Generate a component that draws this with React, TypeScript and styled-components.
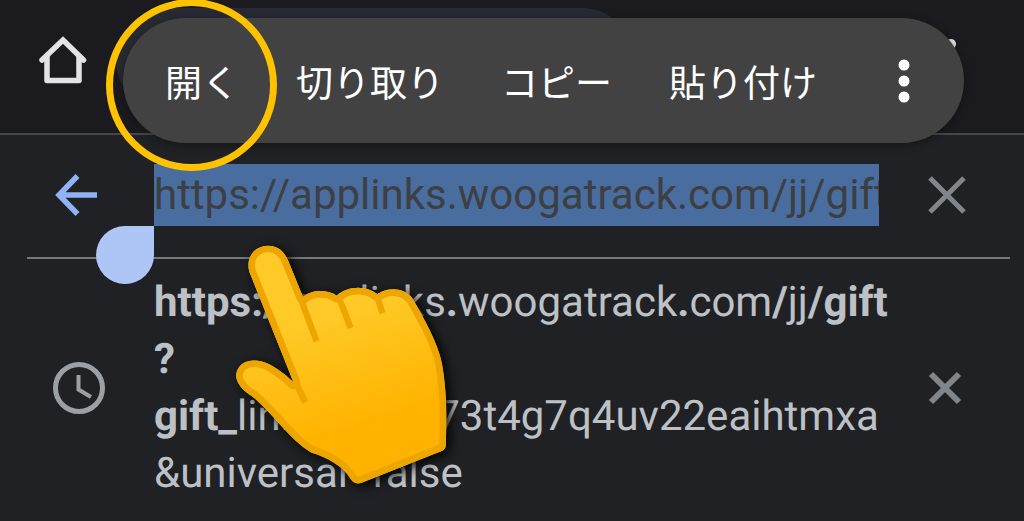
import React from 'react';
import styled, { createGlobalStyle } from 'styled-components';

const GlobalStyle = createGlobalStyle`
  * { box-sizing: border-box; }
  html { background: #202124; }
  body {
    margin: 0;
    background: #202124;
    font-family: Roboto, "Noto Sans CJK JP", sans-serif;
    text-rendering: geometricPrecision;
  }
  button { padding: 0; border: 0; background: none; color: inherit; font: inherit; cursor: pointer; }
  svg { display: block; }
`;

const Page = styled.main`
  position: relative;
  min-height: 100vh;
  overflow: hidden;
`;

const TopBar = styled.header`
  display: flex;
  align-items: flex-start;
  height: 135px;
  padding: 8px 48px 0 36px;
  background: #1b1b1f;
  border-bottom: 2px solid #46464d;
`;

const TopButton = styled.button`
  flex: none;
  margin-top: 26px;
  color: #e3e3e6;
`;

const AddressPill = styled.div`
  width: 518px;
  height: 104px;
  margin-left: 26px;
  margin-right: auto;
  border-radius: 52px;
  background: #282a33;
`;

const SearchRow = styled.form`
  display: flex;
  align-items: center;
  height: 124px;
  margin: 0 14px 0 27px;
  padding: 0 43px 2px 25px;
  border-bottom: 2px solid #76777c;
`;

const IconButton = styled.button<{ $color: string }>`
  flex: none;
  color: ${(p) => p.$color};
`;

const UrlInput = styled.input`
  flex: 1;
  min-width: 0;
  height: 62px;
  margin: 0 48px 0 54px;
  padding: 0;
  border: 0;
  border-radius: 0;
  outline: 0;
  background: #4a6da0;
  color: #3c3f43;
  font: 400 42px/62px Roboto, sans-serif;
`;

const Suggestions = styled.ul`
  margin: 0;
  padding: 15px 59px 18px 50px;
  list-style: none;
`;

const Suggestion = styled.li`
  display: flex;
  align-items: center;
  color: #9aa0a6;
`;

const SuggestionLink = styled.a`
  flex: 1;
  min-width: 0;
  margin: 0 24px 0 47px;
  color: #bdc1c6;
  font-size: 42px;
  line-height: 57px;
  text-decoration: none;
  white-space: nowrap;

  span { display: block; }
  b { font-weight: 700; }
`;

const TextMenu = styled.div`
  position: absolute;
  top: 18px;
  left: 123px;
  right: 60px;
  display: flex;
  align-items: center;
  gap: 57px;
  height: 125px;
  padding: 0 30px 0 42px;
  border-radius: 63px;
  background: #424242;
  box-shadow: 0 2px 8px rgba(0, 0, 0, 0.35);
  color: #fff;
`;

const MenuItem = styled.button`
  flex: none;
  height: 60px;
  font-family: "Noto Sans CJK JP", sans-serif;
  font-size: 37px;
  line-height: 58px;
  white-space: nowrap;
`;

const MoreItem = styled.button`
  display: flex;
  justify-content: center;
  width: 60px;
  margin-left: auto;
`;

const SelectionHandle = styled.div`
  position: absolute;
  top: 226px;
  left: 96px;
  width: 58px;
  height: 58px;
  border-radius: 50% 0 50% 50%;
  background: #aec6f6;
`;

const Highlight = styled.div`
  position: absolute;
  top: -1px;
  left: 106px;
  width: 171px;
  height: 172px;
  border: 7px solid #ffc200;
  border-radius: 50%;
`;

const Pointer = styled.svg`
  position: absolute;
  top: 230px;
  left: 220px;
  width: 260px;
  height: 270px;
  overflow: visible;
  filter: drop-shadow(4px 3px 6px rgba(0, 0, 0, 0.9));
  pointer-events: none;
`;

const HAND =
  'M88 125C76 80 105 47 145 47C175 47 194 66 205 93L249 201C276 178 322 178 350 197C384 168 436 165 472 193C505 170 553 173 578 206C611 264 655 340 666 402C680 480 681 560 677 648Q676 659 665 663L425 758Q402 766 390 744C370 709 320 681 275 668C207 628 160 550 98 500C62 480 43 450 50 427C61 385 112 384 148 403C180 421 205 441 221 458Z';

function Hand() {
  return (
    <Pointer viewBox="0 0 780 810" aria-hidden="true">
      <defs>
        <linearGradient id="skin" gradientUnits="userSpaceOnUse" x1="250" y1="270" x2="360" y2="610">
          <stop offset="0" stopColor="#ffca28" />
          <stop offset="1" stopColor="#ffb300" />
        </linearGradient>
        <clipPath id="handShape">
          <path d={HAND} />
        </clipPath>
      </defs>
      <path d={HAND} fill="url(#skin)" />
      <g clipPath="url(#handShape)" fill="none" stroke="#eda600">
        <path d={HAND} strokeWidth="40" strokeLinejoin="round" />
        <path d="M214 430L256 518" strokeWidth="20" />
        <path d="M238 195L290 334M350 185L392 294M466 185L488 250" strokeWidth="19" />
      </g>
    </Pointer>
  );
}

function Cross({ half, stroke }: { half: number; stroke: number }) {
  return (
    <svg width="40" height="40" viewBox="-20 -20 40 40" stroke="currentColor" strokeWidth={stroke} aria-hidden="true">
      <path d={`M${-half} ${-half}L${half} ${half}M${half} ${-half}L${-half} ${half}`} />
    </svg>
  );
}

const menuItems = ['開く', '切り取り', 'コピー', '貼り付け'];

export default function App() {
  return (
    <>
      <GlobalStyle />
      <Page>
        <TopBar>
          <TopButton type="button" aria-label="ホーム">
            <svg width="54" height="54" viewBox="0 0 54 54" fill="none" stroke="currentColor" strokeWidth="5.500" strokeLinecap="round" strokeLinejoin="round" aria-hidden="true">
              <path d="M6 26L27 6L47.500 26" strokeLinejoin="miter" />
              <path d="M11 23V46.500H43V23" />
            </svg>
          </TopButton>
          <AddressPill />
          <TopButton type="button" aria-label="メニュー">
            <svg width="50" height="54" viewBox="0 0 50 54" fill="currentColor" aria-hidden="true">
              <circle cx="25" cy="10" r="5" />
              <circle cx="25" cy="26" r="5" />
              <circle cx="25" cy="42" r="5" />
            </svg>
          </TopButton>
        </TopBar>

        <SearchRow onSubmit={(e) => e.preventDefault()}>
          <IconButton type="button" aria-label="戻る" $color="#8fb3f5">
            <svg width="48" height="48" viewBox="0 0 48 48" fill="none" stroke="currentColor" strokeWidth="5.500" aria-hidden="true">
              <path d="M25.500 5L7 24L25.500 43M7 24H45" />
            </svg>
          </IconButton>
          <UrlInput
            type="text"
            aria-label="URL"
            spellCheck={false}
            defaultValue="https://applinks.woogatrack.com/jj/gift?gift_link"
          />
          <IconButton type="button" aria-label="消去" $color="#80868b">
            <Cross half={17} stroke={5} />
          </IconButton>
        </SearchRow>

        <Suggestions>
          <Suggestion>
            <svg width="57" height="57" viewBox="0 0 57 57" fill="none" stroke="currentColor" aria-hidden="true">
              <circle cx="29" cy="28" r="23.500" strokeWidth="5" />
              <path d="M28.500 15V29.500L41 37" strokeWidth="4" />
            </svg>
            <SuggestionLink href="#suggestion">
              <span>
                <b>https://</b>applinks<b>.</b>woogatrack<b>.</b>com<b>/</b>jj<b>/gift</b>
              </span>
              <span>
                <b>?</b>
              </span>
              <span>
                <b>gift_</b>link<b>=</b>8jk2w73t4g7q4uv22eaihtmxa
              </span>
              <span>&amp;universal=false</span>
            </SuggestionLink>
            <IconButton type="button" aria-label="候補を削除" $color="#80868b">
              <Cross half={14} stroke={6} />
            </IconButton>
          </Suggestion>
        </Suggestions>

        <SelectionHandle />
        <TextMenu role="toolbar" aria-label="テキスト操作">
          {menuItems.map((label) => (
            <MenuItem key={label} type="button">
              {label}
            </MenuItem>
          ))}
          <MoreItem type="button" aria-label="その他">
            <svg width="12" height="44" viewBox="0 0 12 44" fill="currentColor" aria-hidden="true">
              <circle cx="6" cy="6" r="5.500" />
              <circle cx="6" cy="22" r="5.500" />
              <circle cx="6" cy="38" r="5.500" />
            </svg>
          </MoreItem>
        </TextMenu>
        <Highlight />
        <Hand />
      </Page>
    </>
  );
}
